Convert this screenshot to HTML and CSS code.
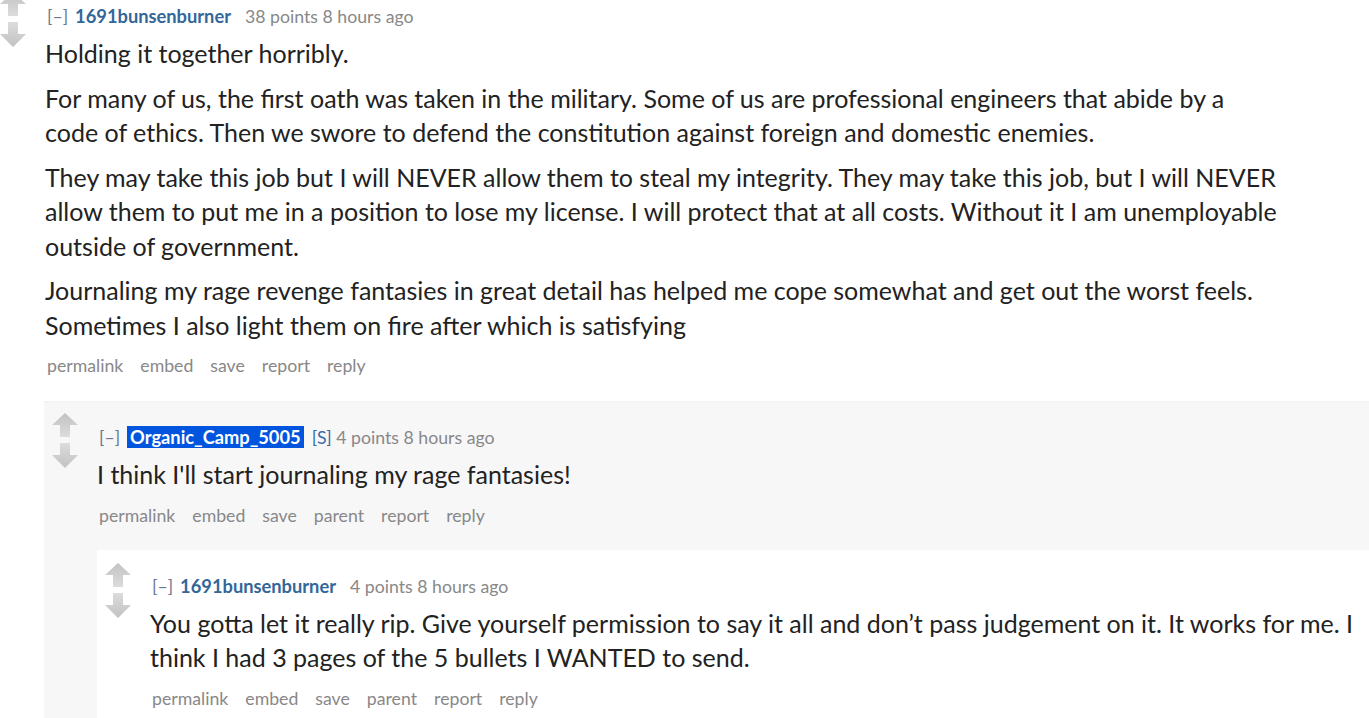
FILE: index.html
```html
<!DOCTYPE html>
<html lang="en">
<head>
<meta charset="utf-8">
<title>Comments</title>
<link rel="stylesheet" href="styles.css">
</head>
<body>
<div class="page">
  <div class="comment">
    <div class="midcol">
      <svg class="arrows" viewBox="0 0 26 55" width="26" height="55" aria-hidden="true">
        <defs>
          <linearGradient id="gu" x1="0" y1="0" x2="0" y2="1"><stop offset="0" stop-color="#c2c2c2"/><stop offset="1" stop-color="#dcdcdc"/></linearGradient>
          <linearGradient id="gd" x1="0" y1="0" x2="0" y2="1"><stop offset="0" stop-color="#dcdcdc"/><stop offset="1" stop-color="#c2c2c2"/></linearGradient>
        </defs>
        <polygon fill="url(#gu)" points="13,0 26,12 18,12 18,24 8,24 8,12 0,12"/>
        <polygon fill="url(#gd)" points="8,30 18,30 18,42 26,42 13,55 0,42 8,42"/>
      </svg>
    </div>
    <div class="entry">
      <p class="tagline"><span class="expand">[–]</span><span class="author">1691bunsenburner</span><span class="score">38 points 8 hours ago</span></p>
      <div class="md">
        <p>Holding it together horribly.</p>
        <p>For many of us, the first oath was taken in the military. Some of us are professional engineers that abide by a code of ethics. Then we swore to defend the constitution against foreign and domestic enemies.</p>
        <p>They may take this job but I will NEVER allow them to steal my integrity. They may take this job, but I will NEVER allow them to put me in a position to lose my license. I will protect that at all costs. Without it I am unemployable outside of government.</p>
        <p>Journaling my rage revenge fantasies in great detail has helped me cope somewhat and get out the worst feels. Sometimes I also light them on fire after which is satisfying</p>
      </div>
      <ul class="buttons"><li>permalink</li><li>embed</li><li>save</li><li>report</li><li>reply</li></ul>

      <div class="child">
        <div class="comment even">
          <div class="midcol">
            <svg class="arrows" viewBox="0 0 26 55" width="26" height="55" aria-hidden="true">
              <polygon fill="url(#gu)" points="13,0 26,12 18,12 18,24 8,24 8,12 0,12"/>
              <polygon fill="url(#gd)" points="8,30 18,30 18,42 26,42 13,55 0,42 8,42"/>
            </svg>
          </div>
          <div class="entry">
            <p class="tagline"><span class="expand">[–]</span><span class="author submitter">Organic_Camp_5005</span><span class="op">[S]</span> <span class="score">4 points 8 hours ago</span></p>
            <div class="md">
              <p>I think I'll start journaling my rage fantasies!</p>
            </div>
            <ul class="buttons"><li>permalink</li><li>embed</li><li>save</li><li>parent</li><li>report</li><li>reply</li></ul>

            <div class="child">
              <div class="comment odd">
                <div class="midcol">
                  <svg class="arrows" viewBox="0 0 26 55" width="26" height="55" aria-hidden="true">
                    <polygon fill="url(#gu)" points="13,0 26,12 18,12 18,24 8,24 8,12 0,12"/>
                    <polygon fill="url(#gd)" points="8,30 18,30 18,42 26,42 13,55 0,42 8,42"/>
                  </svg>
                </div>
                <div class="entry">
                  <p class="tagline"><span class="expand">[–]</span><span class="author">1691bunsenburner</span><span class="score">4 points 8 hours ago</span></p>
                  <div class="md">
                    <p>You gotta let it really rip. Give yourself permission to say it all and don’t pass judgement on it. It works for me. I think I had 3 pages of the 5 bullets I WANTED to send.</p>
                  </div>
                  <ul class="buttons"><li>permalink</li><li>embed</li><li>save</li><li>parent</li><li>report</li><li>reply</li></ul>
                </div>
              </div>
            </div>
          </div>
        </div>
      </div>
    </div>
  </div>
</div>
</body>
</html>
```

FILE: styles.css
```css
html, body {
  margin: 0;
  padding: 0;
  background: #ffffff;
  overflow: hidden;
}

body {
  font-family: "Lato", "Roboto", "Liberation Sans", sans-serif;
  color: #222222;
}

.page {
  margin: -20px 0 0 -8px;
}

.comment {
  display: flex;
  align-items: flex-start;
  padding: 25px 0 0 8px;
}

.comment.even {
  background: #f7f7f8;
  border-top: 1px solid #f2f2f4;
  padding-top: 24px;
}

.comment.odd {
  background: #ffffff;
  padding-top: 25px;
  padding-bottom: 40px;
}

.midcol {
  flex: 0 0 45px;
  padding-top: 12px;
  margin-top: -25px;
}

.comment.odd .midcol {
  margin-top: -24px;
}

.arrows {
  display: block;
}

.entry {
  flex: 1 1 auto;
  min-width: 0;
}

.tagline {
  margin: 0;
  font-size: 17.7px;
  line-height: 22px;
  color: #888888;
  padding-left: 2px;
  white-space: nowrap;
}

.expand {
  color: #6b7891;
  margin-right: 7px;
}

.author {
  color: #336699;
  font-weight: 700;
  font-size: 18.3px;
  margin-right: 14px;
}

.author.submitter {
  background: #0055df;
  color: #ffffff;
  padding: 0 3px;
  margin-right: 8px;
}

.op {
  color: #3a6aa8;
}

.md {
  margin-top: 8px;
  font-size: 25px;
  line-height: 34.5px;
  max-width: 1234px;
  color: #222222;
}

.md p {
  margin: 0 0 10px;
}

.md p:last-child {
  margin-bottom: 0;
}

.buttons {
  list-style: none;
  margin: 13px 0 0;
  padding: 0 0 0 2px;
  display: flex;
  gap: 17px;
  font-size: 17.7px;
  line-height: 22px;
  color: #888888;
}

.child {
  margin: 24px 0 0 -1px;
}

.comment.even .child {
  margin-left: 0;
  margin-top: 23px;
}
```
